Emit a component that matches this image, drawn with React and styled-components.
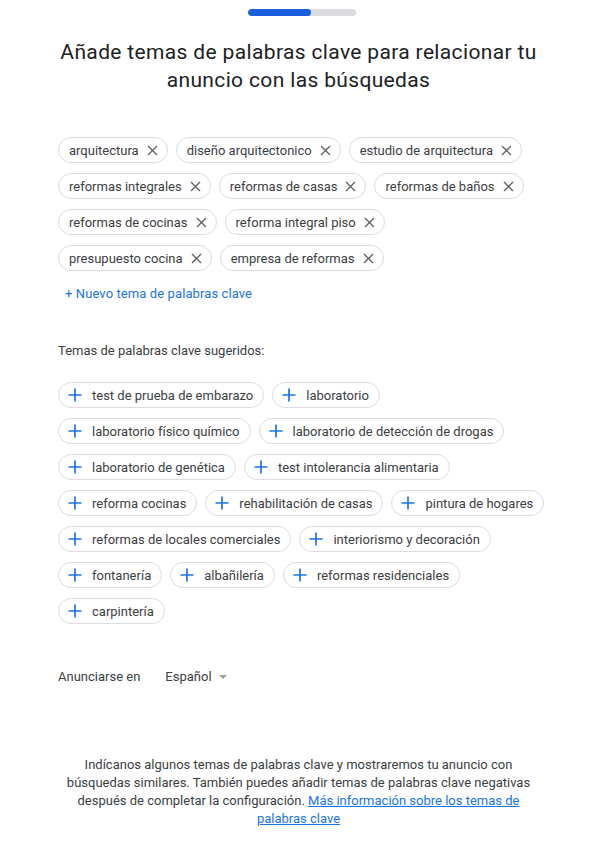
import React from "react";
import styled, { createGlobalStyle } from "styled-components";

const GlobalStyle = createGlobalStyle`
  body {
    margin: 0;
    background: #ffffff;
    font-family: Roboto, "Liberation Sans", Arial, sans-serif;
    color: #3c4043;
  }
`;

const Page = styled.div`
  width: 597px;
  height: 851px;
  padding-top: 9px;
  box-sizing: border-box;
  display: flex;
  flex-direction: column;
`;

const Progress = styled.div`
  align-self: center;
  width: 108px;
  height: 7px;
  border-radius: 4px;
  background: #dadce0;
  overflow: hidden;
  margin-left: 6px;
`;

const ProgressFill = styled.div`
  width: ${({ value }) => value}%;
  height: 100%;
  border-radius: 4px;
  background: #1a5ee0;
`;

const Title = styled.h1`
  margin: 22px 0 0;
  padding: 0 40px;
  text-align: center;
  font-size: 21px;
  font-weight: 400;
  letter-spacing: 0.35px;
  line-height: 28px;
  color: #202124;
`;

const Section = styled.div`
  padding: 0 44px 0 58px;
`;

const ChipList = styled.div`
  display: flex;
  flex-wrap: wrap;
  gap: 10px 8px;
  max-width: ${({ maxWidth }) => maxWidth}px;
  margin-top: ${({ top }) => top}px;
`;

const Chip = styled.div`
  display: inline-flex;
  align-items: center;
  height: 26px;
  box-sizing: border-box;
  border: 1px solid #dadce0;
  border-radius: 13px;
  padding: ${({ suggested }) => (suggested ? "0 10px 0 9px" : "0 9px 0 10px")};
  font-size: 13px;
  color: #3c4043;
  white-space: nowrap;
`;

const IconBox = styled.span`
  display: inline-flex;
  margin: ${({ left }) => (left ? "0 10px 0 0" : "0 0 0 8px")};
`;

const AddLink = styled.a`
  display: inline-block;
  margin-top: 15px;
  margin-left: 7px;
  font-size: 13px;
  letter-spacing: 0.1px;
  color: #1a73e8;
  text-decoration: none;
`;

const Label = styled.div`
  margin-top: ${({ top }) => top}px;
  font-size: 13px;
  color: #3c4043;
`;

const LangRow = styled.div`
  display: flex;
  align-items: center;
  margin-top: 45px;
  font-size: 13px;
  color: #3c4043;
`;

const LangSelect = styled.div`
  display: flex;
  align-items: center;
  margin-left: 25px;
  gap: 7px;
`;

const Caret = styled.span`
  width: 0;
  height: 0;
  border-left: 4.5px solid transparent;
  border-right: 4.5px solid transparent;
  border-top: 4.5px solid #9aa0a6;
  margin-top: 1px;
`;

const Footer = styled.p`
  margin: 72px 0 0;
  padding: 0 60px;
  text-align: center;
  font-size: 13px;
  line-height: 18px;
  color: #3c4043;
`;

const FooterLink = styled.a`
  color: #1a73e8;
  text-decoration: underline;
`;

const CloseIcon = () => (
  <svg width="11" height="11" viewBox="0 0 11 11">
    <path d="M1 1L10 10M10 1L1 10" stroke="#5f6368" strokeWidth="1.4" />
  </svg>
);

const PlusIcon = () => (
  <svg width="14" height="14" viewBox="0 0 14 14">
    <path d="M7 0.5V13.5M0.5 7H13.5" stroke="#1a73e8" strokeWidth="1.7" />
  </svg>
);

const selected = [
  "arquitectura",
  "diseño arquitectonico",
  "estudio de arquitectura",
  "reformas integrales",
  "reformas de casas",
  "reformas de baños",
  "reformas de cocinas",
  "reforma integral piso",
  "presupuesto cocina",
  "empresa de reformas",
];

const suggested = [
  "test de prueba de embarazo",
  "laboratorio",
  "laboratorio físico químico",
  "laboratorio de detección de drogas",
  "laboratorio de genética",
  "test intolerancia alimentaria",
  "reforma cocinas",
  "rehabilitación de casas",
  "pintura de hogares",
  "reformas de locales comerciales",
  "interiorismo y decoración",
  "fontanería",
  "albañilería",
  "reformas residenciales",
  "carpintería",
];

const App = () => {
  return (
    <>
      <GlobalStyle />
      <Page>
        <Progress>
          <ProgressFill value={59} />
        </Progress>
        <Title>
          Añade temas de palabras clave para relacionar tu anuncio con las
          búsquedas
        </Title>
        <Section>
          <ChipList top={43} maxWidth={475}>
            {selected.map(item => (
              <Chip key={item}>
                {item}
                <IconBox>
                  <CloseIcon />
                </IconBox>
              </Chip>
            ))}
          </ChipList>
          <AddLink href="#">+ Nuevo tema de palabras clave</AddLink>
          <Label top={41}>Temas de palabras clave sugeridos:</Label>
          <ChipList top={24} maxWidth={495}>
            {suggested.map(item => (
              <Chip key={item} suggested>
                <IconBox left>
                  <PlusIcon />
                </IconBox>
                {item}
              </Chip>
            ))}
          </ChipList>
          <LangRow>
            <span>Anunciarse en</span>
            <LangSelect>
              <span>Español</span>
              <Caret />
            </LangSelect>
          </LangRow>
        </Section>
        <Footer>
          Indícanos algunos temas de palabras clave y mostraremos tu anuncio con
          búsquedas similares. También puedes añadir temas de palabras clave
          negativas después de completar la configuración.{" "}
          <FooterLink href="#">
            Más información sobre los temas de palabras clave
          </FooterLink>
        </Footer>
      </Page>
    </>
  );
};

export default App;
